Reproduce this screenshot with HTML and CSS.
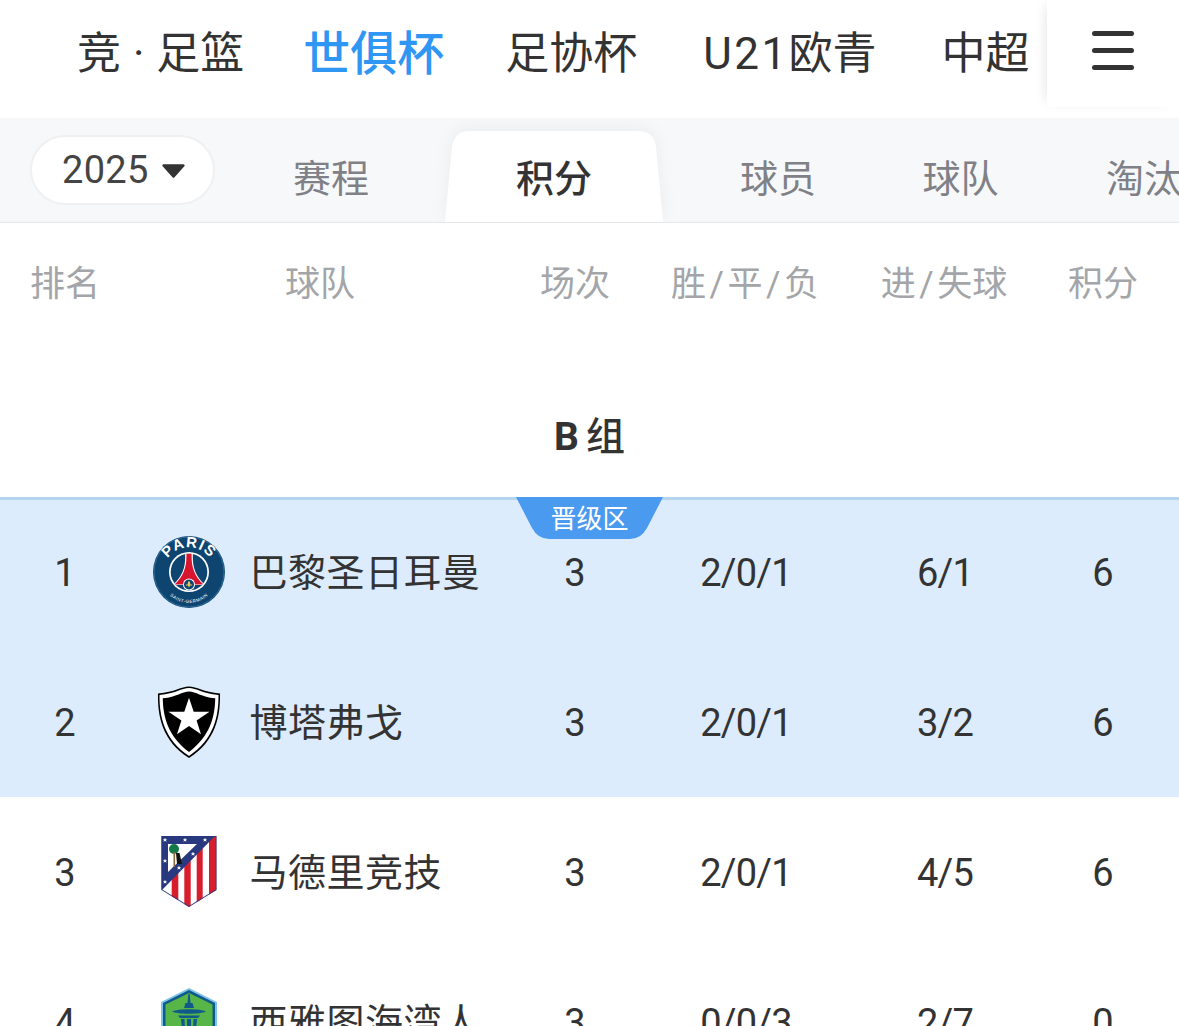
FILE: index.html
```html
<!DOCTYPE html>
<html lang="zh">
<head>
<meta charset="utf-8">
<title>世俱杯 积分</title>
<link rel="stylesheet" href="styles.css">
</head>
<body>
<div class="page">
  <header class="nav">
    <div class="nav-items">
      <span class="nav-item first">竞 · 足篮</span>
      <span class="nav-item active">世俱杯</span>
      <span class="nav-item">足协杯</span>
      <span class="nav-item u21"><span class="latin">U21</span>欧青</span>
      <span class="nav-item">中超</span>
    </div>
    <div class="menu" aria-label="菜单"><i></i><i></i><i></i></div>
  </header>

  <nav class="tabs">
    <div class="year"><span class="year-num">2025</span><svg class="caret" viewBox="0 0 24 16"><path d="M2.500 2h19a1.200 1.200 0 0 1 .9 2L13 14.400a1.400 1.400 0 0 1-2 0L1.600 4a1.200 1.200 0 0 1 .9-2z"/></svg></div>
    <span class="tab t1">赛程</span>
    <span class="tab t2 on">
      <svg class="tab-bg" viewBox="0 0 218 91" preserveAspectRatio="none"><path d="M0 91 L7 16 Q9 0 25 0 H193 Q209 0 211 16 L218 91 Z"/></svg>
      <b>积分</b>
    </span>
    <span class="tab t3">球员</span>
    <span class="tab t4">球队</span>
    <span class="tab t5">淘汰赛</span>
  </nav>

  <div class="row head">
    <span class="c">排名</span><span class="c">球队</span><span class="c">场次</span><span class="c">胜<i class="sl">/</i>平<i class="sl">/</i>负</span><span class="c">进<i class="sl">/</i>失球</span><span class="c">积分</span>
  </div>

  <h2 class="group"><span class="group-b">B</span><span>组</span></h2>

  <section class="zone">
    <div class="badge">
      <svg class="badge-bg" viewBox="0 0 147 42"><path d="M0 0H147L131 31Q125 42 114 42H33Q22 42 16 31Z"/></svg>
      <span>晋级区</span>
    </div>
    <div class="row">
      <span class="c">1</span>
      <span class="team">
        <svg class="logo" viewBox="0 0 72 72">
          <defs>
            <path id="arcTop" d="M9.500 38A26.500 26.500 0 0 1 62.500 38"/>
            <path id="arcBot" d="M8 39A28 28 0 0 0 64 39"/>
            <clipPath id="psgInner"><circle cx="36" cy="36" r="18.300"/></clipPath>
          </defs>
          <circle cx="36" cy="36" r="36" fill="#0e4470"/>
          <circle cx="36" cy="36" r="35" fill="none" stroke="#2f6c97" stroke-width="1"/>
          <circle cx="36" cy="36" r="20" fill="#fff"/>
          <circle cx="36" cy="36" r="18.300" fill="#0e4470"/>
          <g clip-path="url(#psgInner)">
            <path d="M32 16H40C39 30 41.500 39 52 49V56H20V49C30.500 39 33 30 32 16Z" fill="#fff"/>
            <path d="M33.300 16H38.700C38 30 40.500 39 50.500 48.500H21.500C31.500 39 34 30 33.300 16Z" fill="#d8152f"/>
            <path d="M23 49H49V56H23Z" fill="#0e4470"/>
            <circle cx="36" cy="48.500" r="6" fill="#fff"/>
            <circle cx="36" cy="48.500" r="5" fill="#0e4470"/>
            <path d="M36 44.800C37.800 46.800 37.800 49 36 51.600C34.200 49 34.200 46.800 36 44.800ZM32.800 48.500H39.200V49.500H32.800Z" fill="#e7c65a"/>
          </g>
          <text class="psg-top"><textPath href="#arcTop" startOffset="50%" text-anchor="middle">PARIS</textPath></text>
          <text class="psg-bot"><textPath href="#arcBot" startOffset="50%" text-anchor="middle">SAINT-GERMAIN</textPath></text>
        </svg>
        <span class="name c">巴黎圣日耳曼</span>
      </span>
      <span class="c">3</span><span class="c num">2/0/1</span><span class="c num">6/1</span><span class="c">6</span>
    </div>
    <div class="row">
      <span class="c">2</span>
      <span class="team">
        <svg class="logo" viewBox="0 0 72 72">
          <path d="M36 .5C28 .5 22 6 5 7.500C4.500 30 9 55 36 72C63 55 67.500 30 67 7.500C50 6 44 .5 36 .5Z" fill="#000"/>
          <path d="M36 2C28.500 2 22.500 7.600 6.500 9C6.300 30 11 53.500 36 70C61 53.500 65.700 30 65.500 9C49.500 7.600 43.500 2 36 2Z" fill="#fff"/>
          <path d="M36 5.500C29 5.500 24 11 9.800 12.300C10 30 14.500 50 36 66C57.500 50 62 30 62.200 12.300C48 11 43 5.500 36 5.500Z" fill="#000"/>
          <path d="M36 11.700L40.700 25.700H56.500L43.600 34.500L48 48.300L36 40L24 48.300L28.400 34.500L15.500 25.700H31.300Z" fill="#fff"/>
        </svg>
        <span class="name c">博塔弗戈</span>
      </span>
      <span class="c">3</span><span class="c num">2/0/1</span><span class="c num">3/2</span><span class="c">6</span>
    </div>
  </section>

  <div class="row">
    <span class="c">3</span>
    <span class="team">
      <svg class="logo" viewBox="0 0 72 72">
        <defs>
          <clipPath id="shield"><path d="M8.500 0H63.500V54L36 71L8.500 54Z"/></clipPath>
          <path id="st" d="M0-2.300L.7-.7H2.300L1-.1L1.500 1.700L0 .7L-1.500 1.700L-1-.1L-2.300-.7H-.7Z"/>
        </defs>
        <g clip-path="url(#shield)">
          <rect x="8" width="56" height="72" fill="#fff"/>
          <rect x="18.700" y="20" width="6.600" height="52" fill="#d81e2c"/>
          <rect x="31.300" y="10" width="6.400" height="62" fill="#d81e2c"/>
          <rect x="43.700" y="5" width="6" height="67" fill="#d81e2c"/>
          <rect x="56" y="0" width="7.500" height="72" fill="#d81e2c"/>
          <path d="M8 0H62L8 55Z" fill="#28397f"/>
          <path d="M15 8H44L15 36Z" fill="#fff"/>
          <circle cx="21" cy="13" r="5" fill="#127a48"/>
          <rect x="20.500" y="16" width="1.600" height="15" fill="#8a6a3c"/>
          <path d="M23 17H26.500L29 28H24Z" fill="#111"/>
          <g fill="#fff">
            <use href="#st" x="12" y="4"/><use href="#st" x="32" y="4"/><use href="#st" x="52" y="4"/>
            <use href="#st" x="12" y="25"/><use href="#st" x="12" y="46"/><use href="#st" x="26" y="32"/><use href="#st" x="40" y="18"/>
          </g>
          <path d="M8.500 0H63.500V54L36 71L8.500 54Z" fill="none" stroke="#28397f" stroke-width="1.600"/>
        </g>
      </svg>
      <span class="name c">马德里竞技</span>
    </span>
    <span class="c">3</span><span class="c num">2/0/1</span><span class="c num">4/5</span><span class="c">6</span>
  </div>

  <div class="row">
    <span class="c">4</span>
    <span class="team">
      <svg class="logo" viewBox="0 0 72 72">
        <path d="M36 2L64 16V60L36 72L8 60V16Z" fill="#7ec4ea"/>
        <path d="M36 4L62 17V58L36 69.500L10 58V17Z" fill="#0f5a8a"/>
        <path d="M36 7L59.500 18.500V56L36 66.500L12.500 56V18.500Z" fill="#58b548"/>
        <path d="M35.300 8H36.700L37.500 17H39.500L41 22H31L32.500 17H34.500Z" fill="#0f5a8a"/>
        <path d="M19 25.500C25 22.500 47 22.500 53 25.500C48 28.500 24 28.500 19 25.500Z" fill="#0f5a8a"/>
        <path d="M25 29.500H47L45 32H27Z" fill="#0f5a8a"/>
        <path d="M28 33H31.500L32 44H29ZM34 33H38V44H34ZM40.500 33H44L43 44H40Z" fill="#0f5a8a"/>
      </svg>
      <span class="name c">西雅图海湾人</span>
    </span>
    <span class="c">3</span><span class="c num">0/0/3</span><span class="c num">2/7</span><span class="c">0</span>
  </div>
</div>
</body>
</html>
```

FILE: styles.css
```css
* { box-sizing: border-box; }
html, body { margin: 0; padding: 0; background: #fff; }
body {
  font-family: Roboto, "Noto Sans CJK SC", sans-serif;
  color: #333;
}
.page { width: 1179px; height: 1026px; overflow: hidden; }

/* top nav */
.nav { position: relative; display: flex; height: 118px; overflow: hidden; background: #fff; }
.nav-items {
  flex: 1;
  min-width: 0;
  display: flex;
  align-items: center;
  gap: 61px;
  padding: 0 0 11px 77px;
  overflow: hidden;
  white-space: pre;
  font-size: 44px;
}
.nav-item { flex: none; line-height: 1; }
.nav-item.first { word-spacing: 1px; margin-right: -2px; }
.nav-item.active { color: #2f96f3; font-size: 47px; font-weight: 500; }
.u21 { margin: 0 4px 0 5px; }
.latin { letter-spacing: 2.4px; }
.menu {
  flex: none;
  width: 132px;
  height: 107px;
  display: flex;
  flex-direction: column;
  justify-content: center;
  gap: 12px;
  padding: 0 0 7px 45px;
  background: #fff;
  box-shadow: -6px 0 12px -6px rgba(0,0,0,.12);
  position: relative;
}
.menu i { display: block; width: 42px; height: 5px; border-radius: 3px; background: #333; }

/* tabs */
.tabs {
  height: 105px;
  display: flex;
  align-items: stretch;
  background: #f7f8fa;
  border-bottom: 1px solid #e6e7ea;
  padding-left: 30px;
  overflow: hidden;
  white-space: nowrap;
}
.year {
  flex: none;
  width: 185px;
  height: 70px;
  margin-top: 17px;
  border: 2px solid #eff0f2;
  border-radius: 35px;
  background: #fff;
  display: flex;
  align-items: center;
  gap: 12px;
  padding-left: 30px;
  font-size: 38px;
  letter-spacing: .3px;
}
.year-num { color: #444; }
.caret { width: 25px; height: 17px; fill: #333; }
.tab {
  flex: none;
  position: relative;
  display: flex;
  align-items: center;
  justify-content: center;
  padding-top: 10px;
  font-size: 38px;
  color: #7f8187;
  height: 104px;
}
.t1 { width: 230px; padding-left: 2px; }
.t2 { width: 218px; color: #333; }
.t3 { width: 230px; }
.t4 { width: 135px; }
.t5 { width: 270px; }
.tab b { position: relative; font-weight: 500; }
.tab-bg {
  position: absolute;
  left: 0; top: 13px;
  width: 218px; height: 91px;
  fill: #fff;
  filter: drop-shadow(0 -2px 8px rgba(0,0,0,.05));
}

/* table rows */
.row {
  display: grid;
  grid-template-columns: 130px 380px 130px 210px 188px 130px;
  align-items: center;
  justify-items: center;
  height: 150px;
  font-size: 38px;
  line-height: 1;
}
.row.head { height: 120px; font-size: 35px; color: #a3a5a8; white-space: pre; }
.c { padding-top: 2px; }
.num { letter-spacing: -.8px; padding-left: 2px; }
.sl { font-style: normal; margin: 0 3.5px; }
.group {
  margin: 0;
  height: 154px;
  padding-top: 35px;
  display: flex;
  align-items: center;
  justify-content: center;
  gap: 7px;
  font-size: 39px;
  font-weight: 500;
  line-height: 1;
}
.group-b { font-weight: 700; }
.zone { position: relative; background: #dcecfd; box-shadow: inset 0 3px 0 #b7d4ee; }
.badge {
  position: absolute;
  left: 516px; top: 0;
  width: 147px; height: 42px;
  display: flex;
  align-items: center;
  justify-content: center;
  padding-top: 2px;
  color: #fff;
  font-size: 26px;
}
.badge span { position: relative; line-height: 1; }
.badge-bg { position: absolute; inset: 0; width: 147px; height: 42px; fill: #4a9af0; }

.team {
  justify-self: stretch;
  display: flex;
  align-items: center;
  gap: 25px;
  padding-left: 22.5px;
}
.logo { flex: none; width: 72px; height: 72px; }
.psg-top { font: 700 15px "Liberation Sans", sans-serif; fill: #fff; letter-spacing: 1px; }
.psg-bot { font: 400 4.500px "Liberation Sans", sans-serif; fill: #fff; letter-spacing: .5px; }
.name { white-space: nowrap; letter-spacing: .5px; }
```
